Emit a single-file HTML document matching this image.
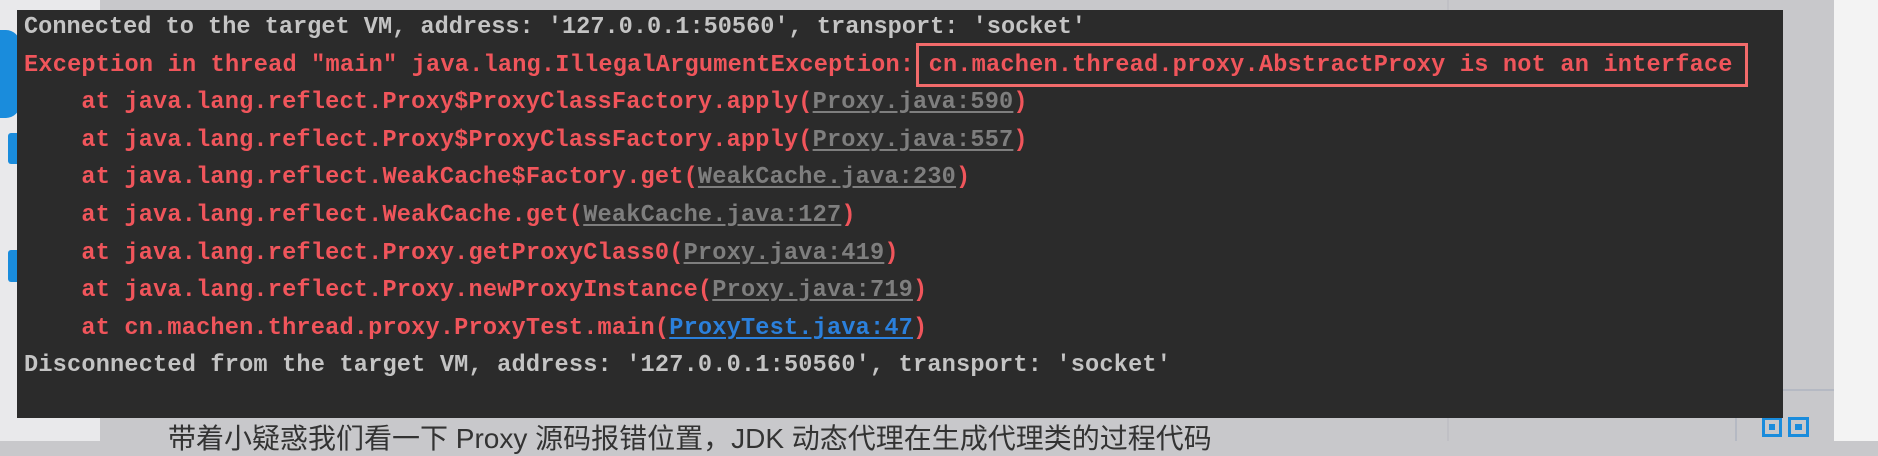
<!DOCTYPE html>
<html><head><meta charset="utf-8"><style>
html,body{margin:0;padding:0;}
body{width:1878px;height:441px;overflow:hidden;position:relative;background:#c8c8cb;font-family:"Liberation Mono",monospace;}
.l{position:absolute;left:0;top:0;width:100px;height:441px;background:#e9e9eb;}
.panel{position:absolute;left:17px;top:10px;width:1766px;height:408px;background:#2b2b2b;}
.line{position:absolute;left:7px;font-size:23.6px;letter-spacing:0.18px;font-weight:bold;white-space:pre;line-height:30px;color:#c4c4c4;}
.r{color:#f0555b;}
.g{color:#7e7e7e;text-decoration:underline;text-underline-offset:3px;}
.b{color:#2b80dc;text-decoration:underline;text-underline-offset:3px;}
.box{position:absolute;left:899px;top:33px;width:826px;height:38px;border:3px solid #f26b6b;}
.cn{position:absolute;left:168px;top:422px;font-family:"Liberation Sans","Noto Sans CJK SC",sans-serif;font-size:28px;color:#333;white-space:pre;line-height:34px;}
</style></head><body>
<div class="l"></div>
<div style="position:absolute;left:0;top:30px;width:20px;height:88px;background:#1a8cdc;border-radius:0 14px 14px 0"></div>
<div style="position:absolute;left:8px;top:133px;width:12px;height:31px;background:#1a8cdc;border-radius:3px"></div>
<div style="position:absolute;left:8px;top:250px;width:12px;height:32px;background:#1a8cdc;border-radius:3px"></div>
<div style="position:absolute;left:1447px;top:0;width:2px;height:441px;background:#c0c0c5"></div>
<div style="position:absolute;left:1834px;top:0;width:44px;height:441px;background:#f3f3f3"></div>
<div style="position:absolute;left:1735px;top:389px;width:99px;height:2px;background:#b5b9c3"></div>
<div style="position:absolute;left:1735px;top:389px;width:2px;height:52px;background:#b5b9c3"></div>
<div style="position:absolute;left:1762px;top:417px;width:14px;height:14px;border:3px solid #1a8cdc"><div style="margin:4px;width:6px;height:6px;background:#1a8cdc"></div></div>
<div style="position:absolute;left:1788px;top:417px;width:15px;height:14px;border:3px solid #1a8cdc"><div style="margin:4px;width:7px;height:6px;background:#1a8cdc"></div></div>
<div class="panel">
<div class="line" style="top:3px;letter-spacing:0">Connected to the target VM, address: '127.0.0.1:50560', transport: 'socket'</div>
<div class="line r" style="top:41px;letter-spacing:0.2px">Exception in thread "main" java.lang.IllegalArgumentException: cn.machen.thread.proxy.AbstractProxy is not an interface</div>
<div class="box"></div>
<div class="line r" style="top:78px">    at java.lang.reflect.Proxy$ProxyClassFactory.apply(<span class="g">Proxy.java:590</span>)</div>
<div class="line r" style="top:116px">    at java.lang.reflect.Proxy$ProxyClassFactory.apply(<span class="g">Proxy.java:557</span>)</div>
<div class="line r" style="top:153px">    at java.lang.reflect.WeakCache$Factory.get(<span class="g">WeakCache.java:230</span>)</div>
<div class="line r" style="top:191px">    at java.lang.reflect.WeakCache.get(<span class="g">WeakCache.java:127</span>)</div>
<div class="line r" style="top:229px">    at java.lang.reflect.Proxy.getProxyClass0(<span class="g">Proxy.java:419</span>)</div>
<div class="line r" style="top:266px">    at java.lang.reflect.Proxy.newProxyInstance(<span class="g">Proxy.java:719</span>)</div>
<div class="line r" style="top:304px">    at cn.machen.thread.proxy.ProxyTest.main(<span class="b">ProxyTest.java:47</span>)</div>
<div class="line" style="top:341px">Disconnected from the target VM, address: '127.0.0.1:50560', transport: 'socket'</div>
</div>
<div class="cn">带着小疑惑我们看一下 Proxy 源码报错位置，JDK 动态代理在生成代理类的过程代码</div>
</body></html>
